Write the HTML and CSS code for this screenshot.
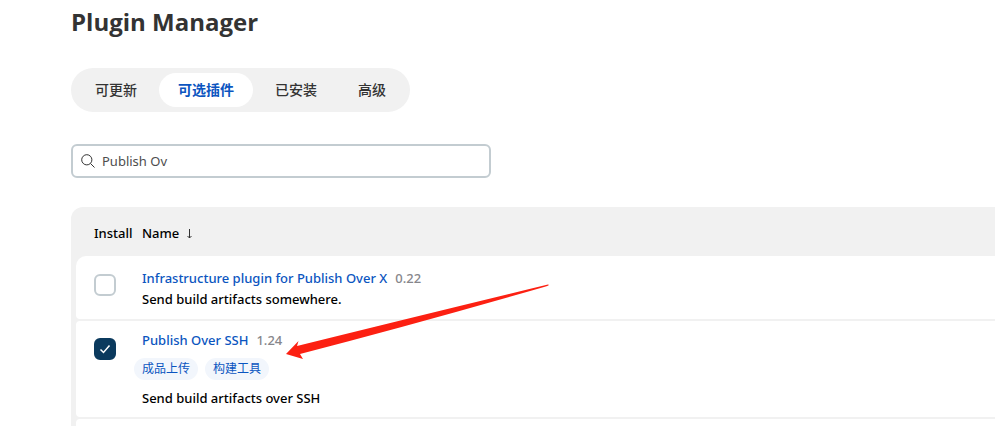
FILE: index.html
```html
<!DOCTYPE html>
<html lang="zh-CN">
<head>
<meta charset="utf-8">
<title>Plugin Manager</title>
<link rel="stylesheet" href="styles.css">
</head>
<body>
<main class="page">
  <h1 class="title">Plugin Manager</h1>
  <nav class="tabs">
    <a class="tab" href="#updates">可更新</a>
    <a class="tab tab-active" href="#available" aria-current="page">可选插件</a>
    <a class="tab" href="#installed">已安装</a>
    <a class="tab" href="#advanced">高级</a>
  </nav>
  <label class="search">
    <svg class="search-icon" viewBox="0 0 14 14" aria-hidden="true"><circle cx="5.8" cy="5.8" r="5.1"/><path d="M9.5 9.5 13.5 13.5"/></svg>
    <input class="search-input" type="text" value="Publish Ov" aria-label="Search plugins">
  </label>
  <div class="table-wrap">
    <table class="plugins">
      <thead>
        <tr>
          <th class="col-install">Install</th>
          <th>Name <svg class="sort-icon" viewBox="0 0 7 10" aria-hidden="true"><path d="M3.5 0V9M1.500 7 3.5 9 5.500 7"/></svg></th>
        </tr>
      </thead>
      <tbody>
        <tr>
          <td class="col-install"><input class="check" type="checkbox" aria-label="Infrastructure plugin for Publish Over X"></td>
          <td>
            <div class="name"><a class="link" href="#publish-over">Infrastructure plugin for Publish Over X</a><span class="version">0.22</span></div>
            <div class="desc">Send build artifacts somewhere.</div>
          </td>
        </tr>
        <tr class="tagged">
          <td class="col-install"><input class="check" type="checkbox" checked aria-label="Publish Over SSH"></td>
          <td>
            <div class="name"><a class="link" href="#publish-over-ssh">Publish Over SSH</a><span class="version">1.24</span></div>
            <div class="tags"><a class="tag" href="#uploader">成品上传</a><a class="tag" href="#builder">构建工具</a></div>
            <div class="desc">Send build artifacts over SSH</div>
          </td>
        </tr>
        <tr><td class="col-install"></td><td></td></tr>
      </tbody>
    </table>
    <svg class="arrow" viewBox="0 0 264 76" aria-hidden="true"><path d="M0 70 12.500 57 11 62 Q140 30 262 0.500 L263 1 Q262 2 258 3 Q130 40 14 70 L17 75Z"/></svg>
  </div>
</main>
</body>
</html>
```
FILE: styles.css
```css
* { box-sizing: border-box; }

body {
  margin: 0;
  background: #fff;
  color: #000;
  font-family: "Noto Sans", "Noto Sans CJK SC", sans-serif;
  font-size: 13px;
  line-height: 20px;
}

a { text-decoration: none; }

.page {
  height: 100vh;
  overflow: hidden;
  padding: 6px 0 0 71px;
}

.title {
  margin: 0 0 30px;
  color: #333;
  font-family: "Open Sans", sans-serif;
  font-size: 24px;
  font-weight: 700;
  line-height: 32px;
}

.tabs {
  display: flex;
  gap: 3px;
  width: fit-content;
  padding: 5px;
  border-radius: 22px;
  background: #f1f1f1;
}

.tab {
  padding: 0 19px;
  border-radius: 17px;
  color: #333;
  font-size: 14px;
  font-weight: 500;
  line-height: 34px;
}

.tab-active {
  background: #fff;
  color: #0b55c0;
  font-weight: 700;
}

.search {
  display: flex;
  align-items: center;
  gap: 7px;
  width: 420px;
  max-width: 100%;
  height: 34px;
  margin: 32px 0 29px;
  padding: 0 8px;
  border: 2px solid #c3ccd1;
  border-radius: 6px;
}

.search-icon {
  width: 14px;
  height: 14px;
  fill: none;
  stroke: #333;
  stroke-width: 1;
}

.search-input {
  flex: 1;
  min-width: 0;
  padding: 0;
  border: 0;
  outline: 0;
  background: transparent;
  color: #4d4d4d;
  font: inherit;
}

.table-wrap {
  position: relative;
  padding-left: 5px;
  border-radius: 12px 0 0 0;
  background: #f1f1f1;
}

.plugins {
  width: 100%;
  border-spacing: 0 2px;
}

.plugins th {
  height: 45px;
  padding: 2px 0 0;
  font-weight: 500;
  text-align: left;
}

.plugins td {
  height: 63px;
  padding: 12px 0 9px;
  background: #fff;
  vertical-align: top;
}

.plugins td:first-child { border-radius: 4px 0 0 4px; }
.plugins tbody tr:first-child td:first-child { border-top-left-radius: 10px; }

.plugins .col-install {
  width: 66px;
  padding-left: 18px;
}

.sort-icon {
  width: 7px;
  height: 10px;
  margin-left: 3px;
  vertical-align: -1px;
  fill: none;
  stroke: #333;
}

.check {
  display: block;
  width: 22px;
  height: 22px;
  margin: 6px 0 0;
  appearance: none;
  border: 2px solid #c3ccd1;
  border-radius: 6px;
}

.check:checked {
  border-color: #0b3a5e;
  background: #0b3a5e url("data:image/svg+xml,%3Csvg xmlns='http://www.w3.org/2000/svg' viewBox='0 0 18 18'%3E%3Cpath d='M4.500 9.500 7.500 12.500 13.500 5.500' fill='none' stroke='white' stroke-width='1.500'/%3E%3C/svg%3E") center / 18px no-repeat;
}

.plugins .tagged td {
  padding-top: 9px;
  padding-bottom: 8px;
}

.tagged .check { margin-top: 8px; }

.name {
  display: flex;
  gap: 8px;
  line-height: 21px;
}

.link {
  color: #0b55c0;
  font-weight: 500;
}

.version {
  color: #86868b;
  font-weight: 500;
}

.desc {
  font-weight: 500;
  line-height: 21px;
}

.tags {
  display: flex;
  gap: 7px;
  margin: 7px 0 8px -8px;
}

.tag {
  padding: 0 8px;
  border-radius: 11px;
  background: #f2f6fc;
  color: #0b55c0;
  font-size: 12px;
  line-height: 22px;
}

.arrow {
  position: absolute;
  top: 77px;
  left: 215px;
  width: 264px;
  height: 76px;
  fill: #fc2012;
}
```
